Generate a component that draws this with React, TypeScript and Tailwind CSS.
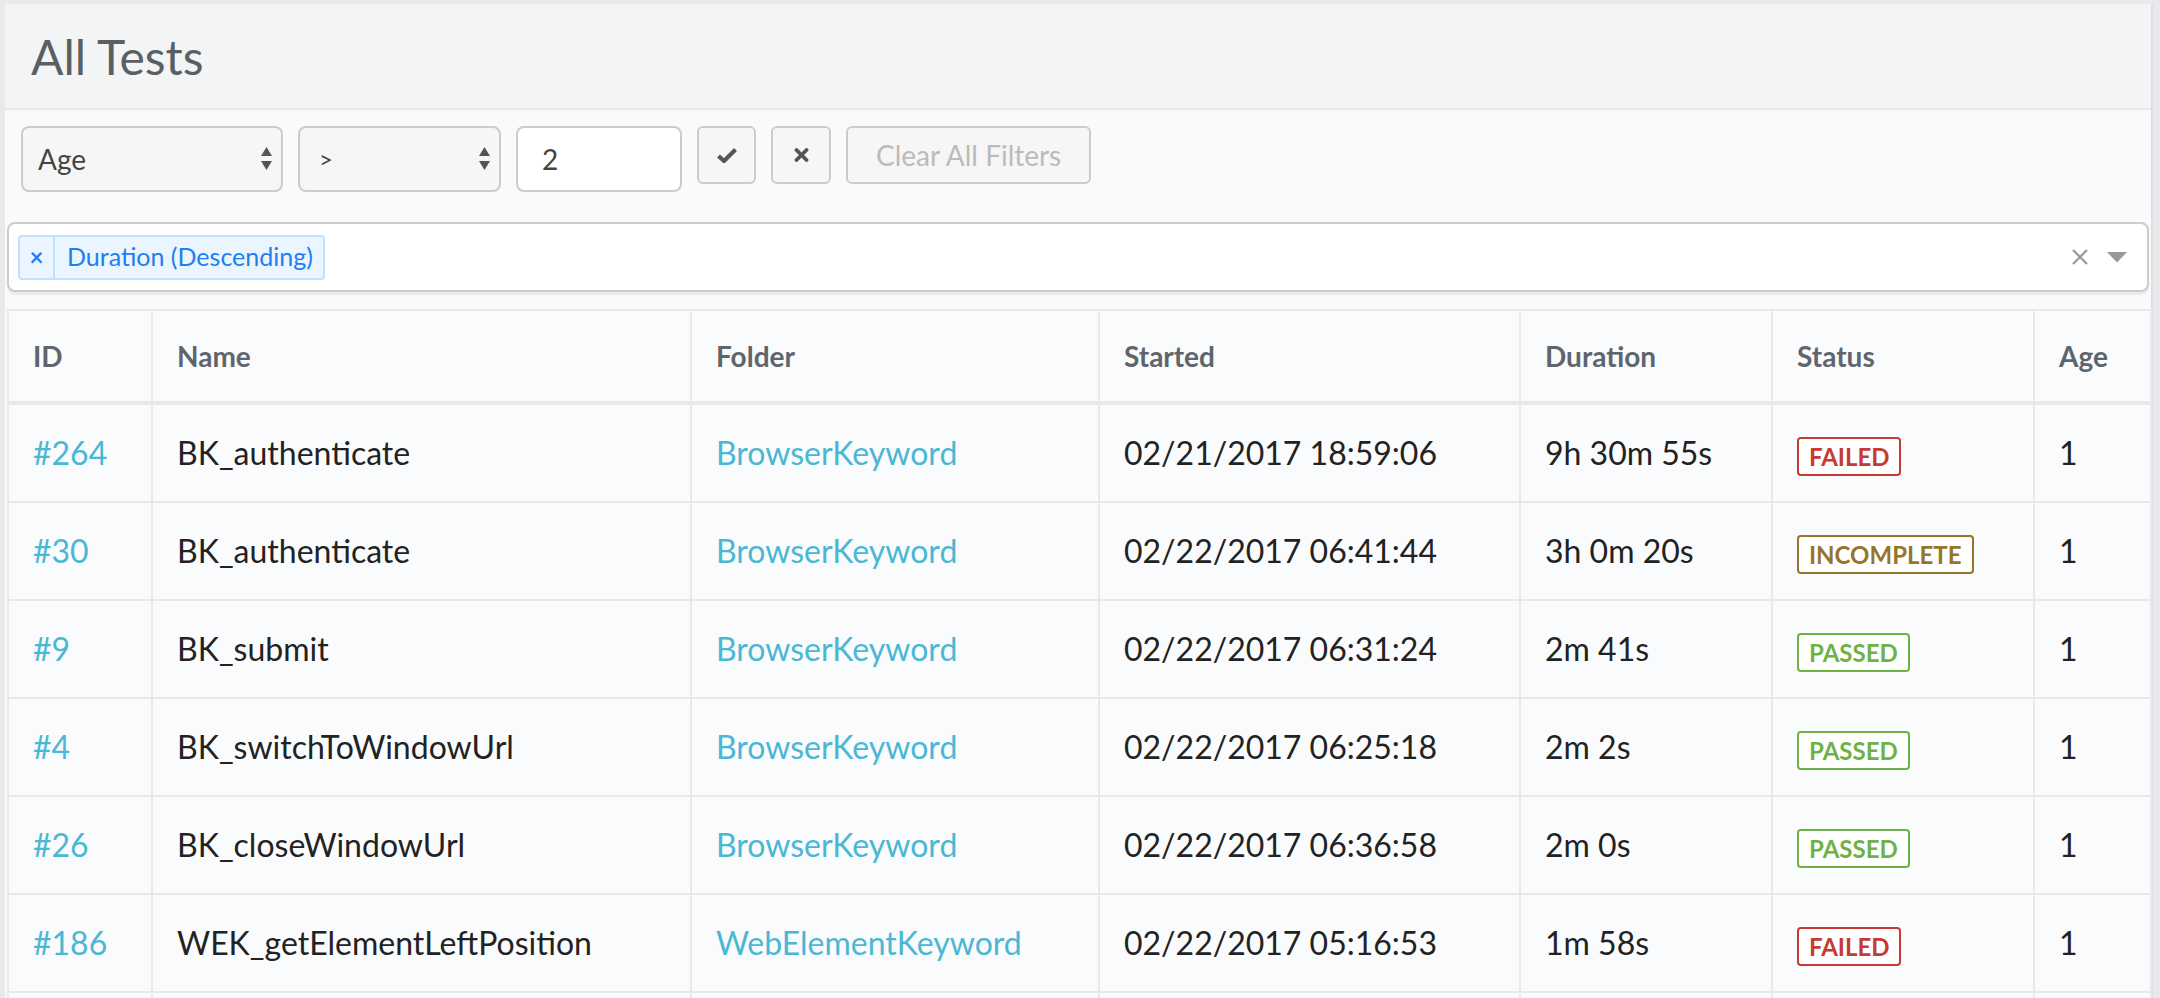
import React from "react";

type Status = "FAILED" | "INCOMPLETE" | "PASSED";

const rows: {
  id: string;
  name: string;
  folder: string;
  started: string;
  duration: string;
  status: Status;
  age: number;
}[] = [
  { id: "#264", name: "BK_authenticate", folder: "BrowserKeyword", started: "02/21/2017 18:59:06", duration: "9h 30m 55s", status: "FAILED", age: 1 },
  { id: "#30", name: "BK_authenticate", folder: "BrowserKeyword", started: "02/22/2017 06:41:44", duration: "3h 0m 20s", status: "INCOMPLETE", age: 1 },
  { id: "#9", name: "BK_submit", folder: "BrowserKeyword", started: "02/22/2017 06:31:24", duration: "2m 41s", status: "PASSED", age: 1 },
  { id: "#4", name: "BK_switchToWindowUrl", folder: "BrowserKeyword", started: "02/22/2017 06:25:18", duration: "2m 2s", status: "PASSED", age: 1 },
  { id: "#26", name: "BK_closeWindowUrl", folder: "BrowserKeyword", started: "02/22/2017 06:36:58", duration: "2m 0s", status: "PASSED", age: 1 },
  { id: "#186", name: "WEK_getElementLeftPosition", folder: "WebElementKeyword", started: "02/22/2017 05:16:53", duration: "1m 58s", status: "FAILED", age: 1 },
];

const badgeClass: Record<Status, string> = {
  FAILED: "border-[#c63a32] text-[#c63a32]",
  INCOMPLETE: "border-[#967529] text-[#967529]",
  PASSED: "border-[#6fb244] text-[#6fb244]",
};

const heads = ["ID", "Name", "Folder", "Started", "Duration", "Status", "Age"];
const widths = ["w-[144px]", "w-[539px]", "w-[408px]", "w-[421px]", "w-[252px]", "w-[262px]", "w-[117px]"];

const SelectArrows = () => (
  <svg width="11" height="24" viewBox="0 0 11 24" className="shrink-0">
    <path d="M5.5 0 L11 9 L0 9 Z" fill="#555" />
    <path d="M0 14 L11 14 L5.5 23 Z" fill="#555" />
  </svg>
);

const App = () => {
  return (
    <div className="h-screen overflow-hidden bg-[#e8e9eb] pt-[4px] pl-[5px] pr-[7px] font-['Lato',_sans-serif]">
      <div className="h-full bg-[#f9fafb] border-r-2 border-[#dddee1]">
        <div className="h-[106px] flex items-center pl-[26px] pt-[2px] bg-[#f3f4f6] border-b-2 border-[#e6e8ea] text-[48px] text-[#5a5f64]">
          All Tests
        </div>

        <div className="flex items-start gap-[15px] pt-[16px] pl-[16px]">
          <div className="w-[262px] h-[66px] rounded-[8px] border-2 border-[#cccccc] bg-[#f6f6f6] flex items-center justify-between pl-[15px] pr-[9px] text-[28px] text-[#444]">
            Age
            <SelectArrows />
          </div>
          <div className="w-[203px] h-[66px] rounded-[8px] border-2 border-[#cccccc] bg-[#f6f6f6] flex items-center justify-between pl-[19px] pr-[9px] text-[24px] text-[#444]">
            &gt;
            <SelectArrows />
          </div>
          <div className="w-[166px] h-[66px] rounded-[8px] border-2 border-[#cccccc] bg-white flex items-center pl-[24px] text-[28px] text-[#444]">
            2
          </div>
          <button className="w-[59px] h-[58px] rounded-[6px] border-2 border-[#cccccc] bg-[#f6f6f6] flex items-center justify-center">
            <svg width="22" height="17" viewBox="0 0 22 17">
              <path d="M2.5 9 L8 14 L19.5 2.5" fill="none" stroke="#555" strokeWidth="4.2" strokeLinejoin="round" />
            </svg>
          </button>
          <button className="w-[60px] h-[58px] rounded-[6px] border-2 border-[#cccccc] bg-[#f6f6f6] flex items-center justify-center">
            <svg width="15" height="14" viewBox="0 0 15 14">
              <path d="M2.5 2 L12.5 12 M12.5 2 L2.5 12" fill="none" stroke="#555" strokeWidth="3.8" strokeLinecap="round" />
            </svg>
          </button>
          <button className="h-[58px] px-[28px] rounded-[6px] border-2 border-[#cccccc] bg-[#f6f6f6] text-[28px] text-[#bbbbbb]">
            Clear All Filters
          </button>
        </div>

        <div className="mt-[30px] mx-[2px] h-[70px] rounded-[8px] border-2 border-[#cccccc] bg-white shadow-[0_3px_0_#e9ebee] flex items-center pl-[9px] pr-[20px]">
          <div className="h-[45px] flex items-stretch rounded-[4px] border-2 border-[#c2e0ff] bg-[#ebf5ff] text-[#1e80f0]">
            <span className="w-[35px] flex items-center justify-center border-r-2 border-[#c2e0ff] text-[24px] font-bold">×</span>
            <span className="flex items-center pl-[12px] pr-[10px] text-[25px]">Duration (Descending)</span>
          </div>
          <div className="flex-1" />
          <svg width="18" height="18" viewBox="0 0 18 18" className="mr-[18px]">
            <path d="M2 2 L16 16 M16 2 L2 16" fill="none" stroke="#999" strokeWidth="2.2" />
          </svg>
          <svg width="20" height="11" viewBox="0 0 20 11">
            <path d="M0 0 L20 0 L10 10.5 Z" fill="#999" />
          </svg>
        </div>

        <table className="mt-[17px] ml-[2px] table-fixed border-collapse w-[2143px] bg-[#fafbfc]">
          <colgroup>
            {widths.map((w, i) => (
              <col key={i} className={w} />
            ))}
          </colgroup>
          <thead>
            <tr>
              {heads.map((h) => (
                <th
                  key={h}
                  className="text-left font-bold text-[28px] leading-[42px] text-[#5f656c] py-[24px] px-[24px] border-2 border-b-4 border-[#e8e9eb]"
                >
                  {h}
                </th>
              ))}
            </tr>
          </thead>
          <tbody>
            {rows.map((r, i) => (
              <tr key={i} className="text-[32px] leading-[48px] text-[#222]">
                <td className="px-[24px] py-[24px] border-2 border-[#e8e9eb] text-[#4ab7d4]">{r.id}</td>
                <td className="px-[24px] py-[24px] border-2 border-[#e8e9eb] whitespace-nowrap">{r.name}</td>
                <td className="px-[24px] py-[24px] border-2 border-[#e8e9eb] text-[#4ab7d4]">{r.folder}</td>
                <td className="px-[24px] py-[24px] border-2 border-[#e8e9eb] whitespace-nowrap">{r.started}</td>
                <td className="px-[24px] py-[24px] border-2 border-[#e8e9eb] whitespace-nowrap">{r.duration}</td>
                <td className="px-[24px] py-[24px] border-2 border-[#e8e9eb]">
                  <span
                    className={`inline-block align-middle bg-white border-2 rounded-[4px] px-[10px] py-[5px] text-[24px] leading-[25px] font-bold ${badgeClass[r.status]}`}
                  >
                    {r.status}
                  </span>
                </td>
                <td className="px-[24px] py-[24px] border-2 border-[#e8e9eb]">{r.age}</td>
              </tr>
            ))}
            <tr>
              {heads.map((h) => (
                <td key={h} className="h-[96px] border-2 border-[#e8e9eb]" />
              ))}
            </tr>
          </tbody>
        </table>
      </div>
    </div>
  );
};

export default App;
